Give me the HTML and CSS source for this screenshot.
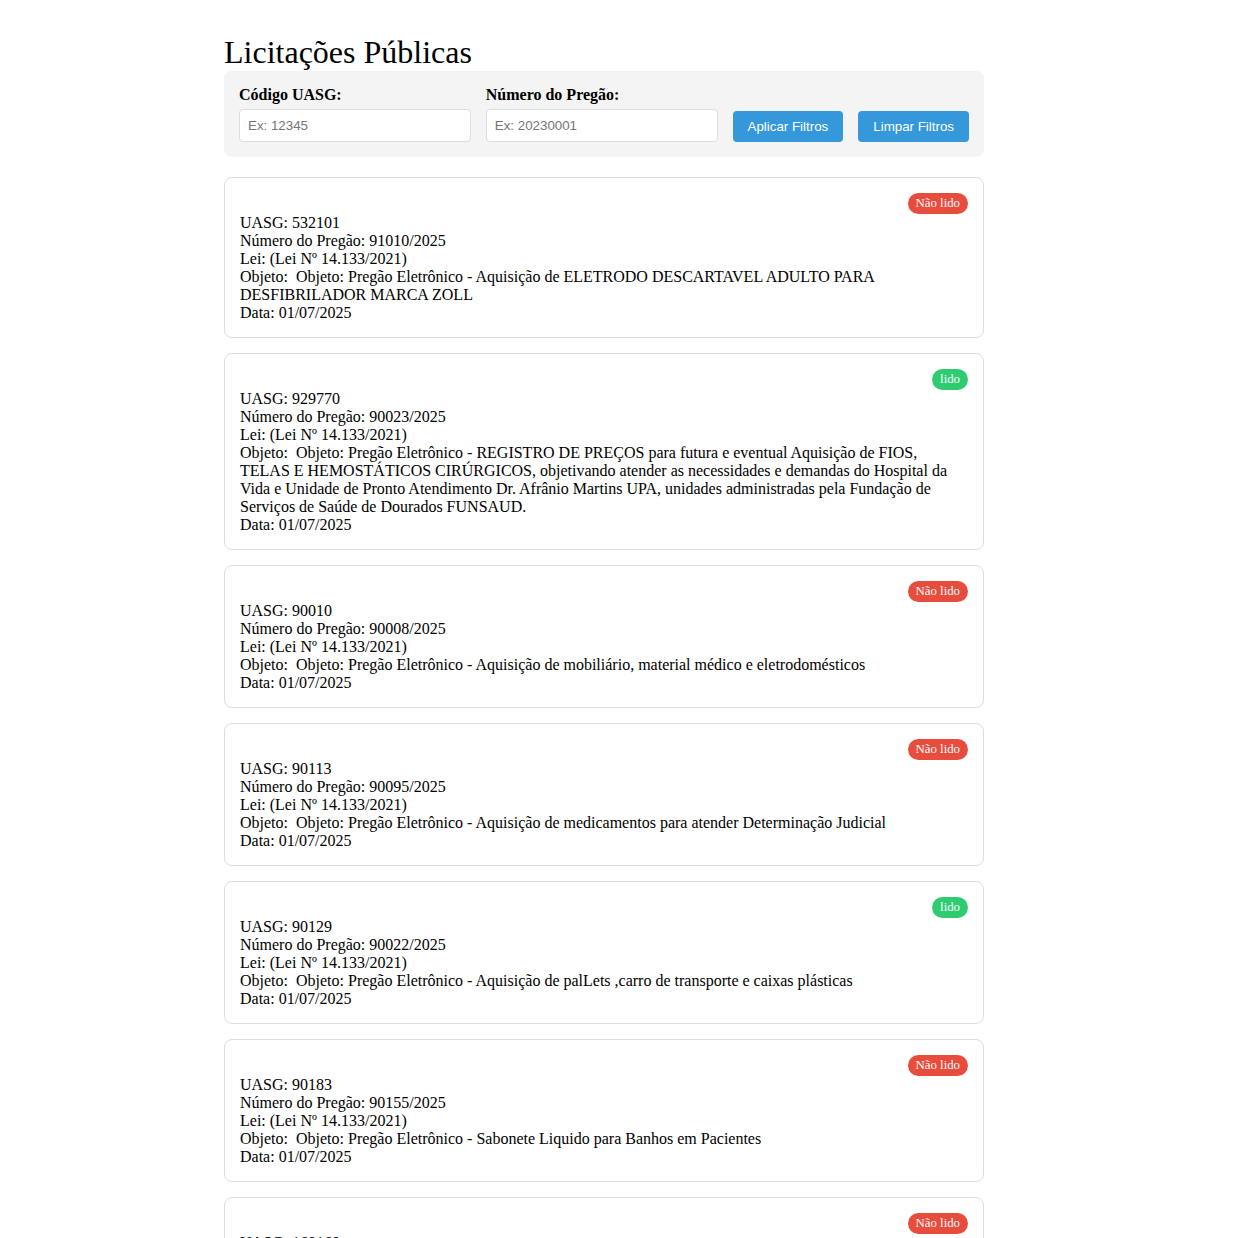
FILE: index.html
```html
<!DOCTYPE html>
<html lang="pt-BR">
<head>
<meta charset="utf-8">
<title>Licitações Públicas</title>
<link rel="stylesheet" href="styles.css">
</head>
<body>
<div class="container">
  <h1 class="title">Licitações Públicas</h1>
  <div class="filters">
    <div class="filter-group">
      <label class="filter-label">Código UASG:</label>
      <input class="filter-input" type="text" placeholder="Ex: 12345">
    </div>
    <div class="filter-group">
      <label class="filter-label">Número do Pregão:</label>
      <input class="filter-input" type="text" placeholder="Ex: 20230001">
    </div>
    <button class="btn">Aplicar Filtros</button>
    <button class="btn">Limpar Filtros</button>
  </div>

  <div class="list">
    <div class="card">
      <span class="status unread">Não lido</span>
      <div class="info">
        <div>UASG: 532101</div>
        <div>Número do Pregão: 91010/2025</div>
        <div>Lei: (Lei Nº 14.133/2021)</div>
        <div>Objeto:&nbsp; Objeto: Pregão Eletrônico - Aquisição de ELETRODO DESCARTAVEL ADULTO PARA DESFIBRILADOR MARCA ZOLL</div>
        <div>Data: 01/07/2025</div>
      </div>
    </div>
    <div class="card">
      <span class="status read">lido</span>
      <div class="info">
        <div>UASG: 929770</div>
        <div>Número do Pregão: 90023/2025</div>
        <div>Lei: (Lei Nº 14.133/2021)</div>
        <div>Objeto:&nbsp; Objeto: Pregão Eletrônico - REGISTRO DE PREÇOS para futura e eventual Aquisição de FIOS, TELAS E HEMOSTÁTICOS CIRÚRGICOS, objetivando atender as necessidades e demandas do Hospital da Vida e Unidade de Pronto Atendimento Dr. Afrânio Martins UPA, unidades administradas pela Fundação de Serviços de Saúde de Dourados FUNSAUD.</div>
        <div>Data: 01/07/2025</div>
      </div>
    </div>
    <div class="card">
      <span class="status unread">Não lido</span>
      <div class="info">
        <div>UASG: 90010</div>
        <div>Número do Pregão: 90008/2025</div>
        <div>Lei: (Lei Nº 14.133/2021)</div>
        <div>Objeto:&nbsp; Objeto: Pregão Eletrônico - Aquisição de mobiliário, material médico e eletrodomésticos</div>
        <div>Data: 01/07/2025</div>
      </div>
    </div>
    <div class="card">
      <span class="status unread">Não lido</span>
      <div class="info">
        <div>UASG: 90113</div>
        <div>Número do Pregão: 90095/2025</div>
        <div>Lei: (Lei Nº 14.133/2021)</div>
        <div>Objeto:&nbsp; Objeto: Pregão Eletrônico - Aquisição de medicamentos para atender Determinação Judicial</div>
        <div>Data: 01/07/2025</div>
      </div>
    </div>
    <div class="card">
      <span class="status read">lido</span>
      <div class="info">
        <div>UASG: 90129</div>
        <div>Número do Pregão: 90022/2025</div>
        <div>Lei: (Lei Nº 14.133/2021)</div>
        <div>Objeto:&nbsp; Objeto: Pregão Eletrônico - Aquisição de palLets ,carro de transporte e caixas plásticas</div>
        <div>Data: 01/07/2025</div>
      </div>
    </div>
    <div class="card">
      <span class="status unread">Não lido</span>
      <div class="info">
        <div>UASG: 90183</div>
        <div>Número do Pregão: 90155/2025</div>
        <div>Lei: (Lei Nº 14.133/2021)</div>
        <div>Objeto:&nbsp; Objeto: Pregão Eletrônico - Sabonete Liquido para Banhos em Pacientes</div>
        <div>Data: 01/07/2025</div>
      </div>
    </div>
    <div class="card">
      <span class="status unread">Não lido</span>
      <div class="info">
        <div>UASG: 160160</div>
        <div>Número do Pregão: 90012/2025</div>
        <div>Lei: (Lei Nº 14.133/2021)</div>
        <div>Objeto:&nbsp; Objeto: Pregão Eletrônico - Aquisição de materiais</div>
        <div>Data: 01/07/2025</div>
      </div>
    </div>
  </div>
</div>
</body>
</html>
```
FILE: styles.css
```css
html, body {
  margin: 0;
  padding: 0;
  background: #ffffff;
}

body {
  font-family: "Liberation Serif", "Times New Roman", serif;
  font-size: 16px;
  color: #000;
}

.container {
  width: 760px;
  margin: 0 0 0 224px;
  padding-top: 34px;
}

.title {
  font-size: 32px;
  font-weight: normal;
  margin: 0;
  line-height: normal;
}

.filters {
  display: flex;
  align-items: flex-end;
  gap: 15px;
  background: #f4f4f4;
  border-radius: 8px;
  padding: 15px;
  margin-bottom: 20px;
}

.filter-group {
  flex: 1;
  display: flex;
  flex-direction: column;
}

.filter-label {
  font-weight: bold;
  margin-bottom: 5px;
}

.filter-input {
  font-family: "Liberation Sans", Arial, sans-serif;
  font-size: 13.333px;
  padding: 8px;
  border: 1px solid #dddddd;
  border-radius: 4px;
  background: #fff;
  color: #000;
}

.filter-input::placeholder {
  color: #757575;
}

.btn {
  font-family: "Liberation Sans", Arial, sans-serif;
  font-size: 13.333px;
  padding: 8px 15px;
  background: #3498db;
  color: #fff;
  border: none;
  border-radius: 4px;
}

.list {
  display: flex;
  flex-direction: column;
  gap: 15px;
}

.card {
  display: flex;
  flex-direction: column;
  border: 1px solid #dddddd;
  border-radius: 8px;
  padding: 15px;
}

.status {
  align-self: flex-end;
  font-size: 12.8px;
  color: #fff;
  padding: 3px 8px;
  border-radius: 12px;
}

.status.unread {
  background: #e74c3c;
}

.status.read {
  background: #2ecc71;
}

.info {
  line-height: 18px;
}
```
